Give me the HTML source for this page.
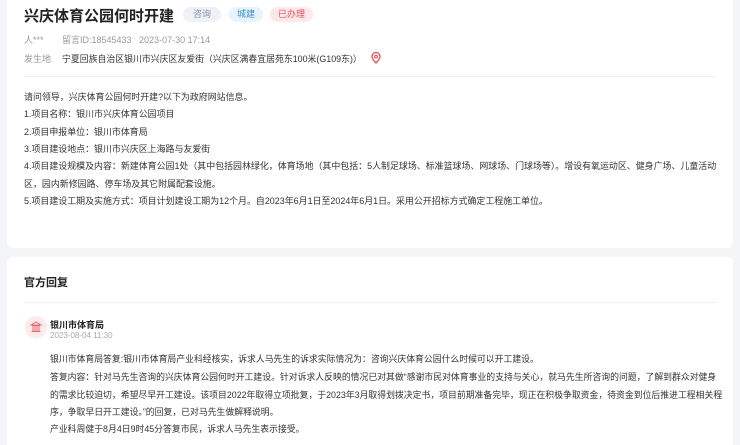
<!DOCTYPE html>
<html><head><meta charset="utf-8"><style>
*{margin:0;padding:0;box-sizing:border-box}
html,body{width:740px;height:445px;overflow:hidden}
body{background:#f4f5f7;font-family:"Liberation Sans","Noto Sans CJK SC",sans-serif;color:#333;position:relative}
.card{position:absolute;left:7px;width:726px;background:#fff;border-radius:6px}
.a{position:absolute;white-space:nowrap}
.tag{position:absolute;top:7px;height:15px;border-radius:8px;font-size:9px;line-height:15px;text-align:center}
.p{position:absolute;left:24px;font-size:8.95px;color:#333;white-space:nowrap}
.r{position:absolute;left:50px;font-size:8.85px;color:#333;white-space:nowrap}
</style></head><body>
<div class="card" style="top:-6px;height:254px"></div>
<div class="a" style="left:24px;top:5px;font-size:15px;font-weight:bold;color:#222">兴庆体育公园何时开建</div>
<div class="tag" style="left:183px;width:38px;background:#eef1f5;color:#8a94a6">咨询</div>
<div class="tag" style="left:229px;width:34px;background:#e8f3fb;color:#3b8fd0">城建</div>
<div class="tag" style="left:270px;width:43px;background:#fde9ea;color:#e0505a">已办理</div>
<div class="a" style="left:24px;top:33px;font-size:9px;color:#999">人***</div>
<div class="a" style="left:62px;top:33px;font-size:9px;color:#999">留言ID:18545433&nbsp;&nbsp;&nbsp;2023-07-30 17:14</div>
<div class="a" style="left:24px;top:52px;font-size:9px;color:#999">发生地</div>
<div class="a" style="left:62px;top:52px;font-size:8.9px;color:#333">宁夏回族自治区银川市兴庆区友爱街（兴庆区满春宜居苑东100米(G109东)）</div>
<svg class="a" style="left:371px;top:52px" width="10" height="12" viewBox="0 0 10 12"><path d="M5 11C2 8 1 6 1 4.5A4 4 0 0 1 9 4.5C9 6 8 8 5 11Z" fill="none" stroke="#e0505a" stroke-width="1.3"/><circle cx="5" cy="4.6" r="1.4" fill="none" stroke="#e0505a" stroke-width="1.1"/></svg>
<div class="a" style="left:24px;top:76px;width:692px;height:1px;background:#eee"></div>
<div class="p" style="top:90px">请问领导，兴庆体育公园何时开建?以下为政府网站信息。</div>
<div class="p" style="top:107px">1.项目名称：银川市兴庆体育公园项目</div>
<div class="p" style="top:125px">2.项目申报单位：银川市体育局</div>
<div class="p" style="top:142px">3.项目建设地点：银川市兴庆区上海路与友爱街</div>
<div class="p" style="top:159px">4.项目建设规模及内容：新建体育公园1处（其中包括园林绿化，体育场地（其中包括：5人制足球场、标准篮球场、网球场、门球场等）。增设有氧运动区、健身广场、儿童活动</div>
<div class="p" style="top:177px">区，园内新修园路、停车场及其它附属配套设施。</div>
<div class="p" style="top:194px">5.项目建设工期及实施方式：项目计划建设工期为12个月。自2023年6月1日至2024年6月1日。采用公开招标方式确定工程施工单位。</div>
<div class="card" style="top:257px;height:200px"></div>
<div class="a" style="left:24px;top:274px;font-size:11px;font-weight:bold;color:#222">官方回复</div>
<div class="a" style="left:24px;top:302px;width:692px;height:1px;background:#eee"></div>
<div class="a" style="left:25px;top:316px;width:22px;height:22px;border-radius:50%;background:#fdeaea"></div>
<svg class="a" style="left:30px;top:321px" width="12" height="12" viewBox="0 0 12 12"><path d="M1 4L6 1L11 4Z M2 4.5H10 M3 5V10 M5 5V10 M7 5V10 M9 5V10 M1.5 10.5H10.5" fill="none" stroke="#e06a70" stroke-width="1"/></svg>
<div class="a" style="left:50px;top:318px;font-size:9px;font-weight:bold;color:#222">银川市体育局</div>
<div class="a" style="left:50px;top:331px;font-size:8px;color:#aaa">2023-08-04 11:30</div>
<div class="r" style="top:352px">银川市体育局答复:银川市体育局产业科经核实，诉求人马先生的诉求实际情况为：咨询兴庆体育公园什么时候可以开工建设。</div>
<div class="r" style="top:370px">答复内容：针对马先生咨询的兴庆体育公园何时开工建设。针对诉求人反映的情况已对其做“感谢市民对体育事业的支持与关心，就马先生所咨询的问题，了解到群众对健身</div>
<div class="r" style="top:388px">的需求比较迫切，希望尽早开工建设。该项目2022年取得立项批复，于2023年3月取得划拨决定书，项目前期准备完毕，现正在积极争取资金，待资金到位后推进工程相关程</div>
<div class="r" style="top:405px">序，争取早日开工建设。”的回复，已对马先生做解释说明。</div>
<div class="r" style="top:422px">产业科周健于8月4日9时45分答复市民，诉求人马先生表示接受。</div>
</body></html>
